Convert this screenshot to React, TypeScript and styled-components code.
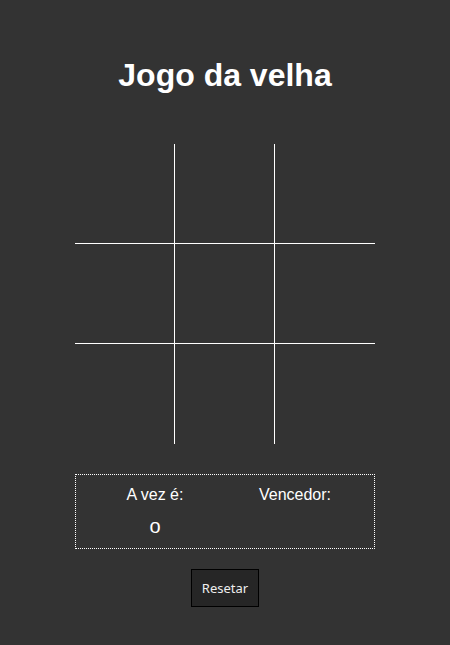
import React, { useState } from "react";
import styled, { createGlobalStyle } from "styled-components";

const GlobalStyle = createGlobalStyle`
  html, body {
    margin: 0;
    padding: 0;
    background: #333333;
  }
  body {
    font-family: "Liberation Sans", Arial, sans-serif;
    color: #ffffff;
  }
`;

const Page = styled.div`
  display: flex;
  flex-direction: column;
  align-items: center;
  min-height: 645px;
`;

const Title = styled.h1`
  margin: 57px 0 50px;
  font-family: "Liberation Sans", Arial, sans-serif;
  font-size: 32px;
  font-weight: 700;
  line-height: 37px;
  color: #ffffff;
`;

const Board = styled.div`
  display: grid;
  grid-template-columns: repeat(3, 100px);
  grid-template-rows: repeat(3, 100px);
  width: 300px;
  height: 300px;
  margin-bottom: 30px;
`;

const Cell = styled.button<{ $right: boolean; $bottom: boolean }>`
  box-sizing: border-box;
  margin: 0;
  padding: 0;
  background: transparent;
  border: none;
  border-right: ${(p) => (p.$right ? "1px solid #ffffff" : "none")};
  border-bottom: ${(p) => (p.$bottom ? "1px solid #ffffff" : "none")};
  color: #ffffff;
  font-family: "Liberation Sans", Arial, sans-serif;
  font-size: 48px;
  cursor: pointer;
`;

const InfoBox = styled.div`
  box-sizing: border-box;
  width: 300px;
  height: 75px;
  border: 1px dotted #ffffff;
  display: flex;
  justify-content: center;
  padding-top: 11px;
  margin-bottom: 20px;
`;

const InfoColumn = styled.div`
  width: 140px;
  display: flex;
  flex-direction: column;
  align-items: center;
`;

const Label = styled.div`
  font-size: 16px;
  line-height: 18px;
`;

const Value = styled.div`
  margin-top: 11px;
  font-size: 20px;
  line-height: 23px;
  min-height: 23px;
`;

const ResetButton = styled.button`
  box-sizing: border-box;
  width: 68px;
  height: 38px;
  padding: 0;
  background: #262626;
  border: 1px solid #000000;
  border-radius: 0;
  color: #eeeeee;
  font-family: "Noto Sans", "Open Sans", sans-serif;
  font-size: 13px;
  cursor: pointer;
`;

export default function App() {
  const [cells, setCells] = useState<string[]>(Array(9).fill(""));
  const [turn, setTurn] = useState("o");
  const [winner] = useState("");

  const play = (i: number) => {
    if (cells[i]) return;
    const next = cells.slice();
    next[i] = turn;
    setCells(next);
    setTurn(turn === "o" ? "x" : "o");
  };

  const reset = () => {
    setCells(Array(9).fill(""));
    setTurn("o");
  };

  return (
    <Page>
      <GlobalStyle />
      <Title>Jogo da velha</Title>
      <Board>
        {cells.map((c, i) => (
          <Cell
            key={i}
            $right={i % 3 !== 2}
            $bottom={i < 6}
            onClick={() => play(i)}
          >
            {c}
          </Cell>
        ))}
      </Board>
      <InfoBox>
        <InfoColumn>
          <Label>A vez é:</Label>
          <Value>{turn}</Value>
        </InfoColumn>
        <InfoColumn>
          <Label>Vencedor:</Label>
          <Value>{winner}</Value>
        </InfoColumn>
      </InfoBox>
      <ResetButton onClick={reset}>Resetar</ResetButton>
    </Page>
  );
}
